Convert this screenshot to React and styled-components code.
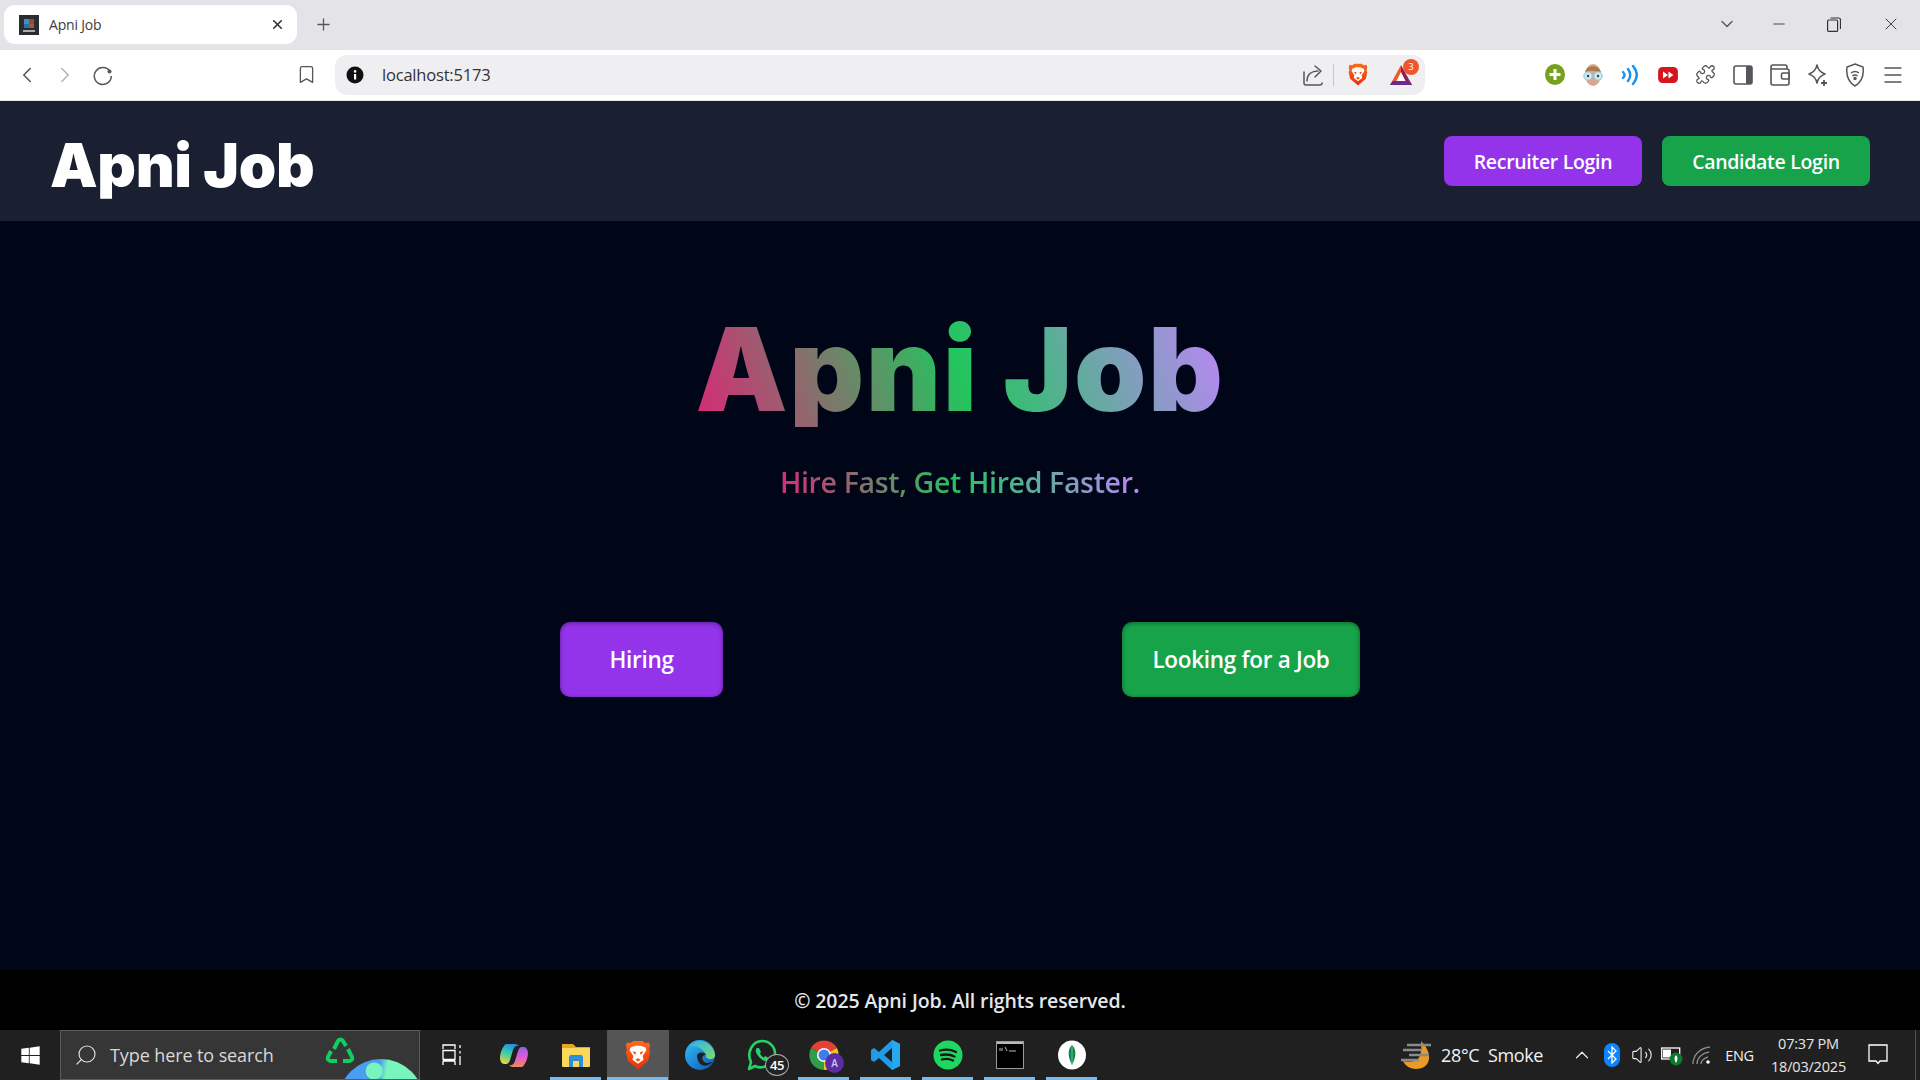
import React from "react";
import styled, { createGlobalStyle } from "styled-components";
import { ChevronLeft, ChevronRight, Bookmark, Puzzle, ChevronDown, Minus, X, Plus, Search, ChevronUp, Volume2, Menu } from "lucide-react";
import { FaWindows } from "react-icons/fa";

const Global = createGlobalStyle`
  html, body { margin: 0; padding: 0; width: 1920px; height: 1080px; overflow: hidden; background: #020617; }
  * { box-sizing: border-box; }
  body { font-family: "Open Sans", "Noto Sans", sans-serif; }
`;
const Screen = styled.div`display:flex;flex-direction:column;width:1920px;height:1080px;overflow:hidden;`;
const TabStrip = styled.div`display:flex;align-items:flex-start;height:50px;flex:none;background:#e3e3e8;padding:5px 0 0 4px;`;
const Tab = styled.div`display:flex;align-items:center;width:293px;height:39px;background:#fff;border-radius:11px;padding:0 12px 0 15px;color:#3c3c40;`;
const TabTitle = styled.span`font-size:14px;margin-left:10px;flex:1;letter-spacing:-.2px;`;
const Slot = styled.div`display:flex;align-items:center;justify-content:center;flex:none;width:${p=>p.$w||38}px;height:${p=>p.$h||38}px;color:${p=>p.$c||"#55565a"};margin-left:${p=>p.$ml||0}px;`;
const Toolbar = styled.div`display:flex;align-items:center;height:51px;flex:none;background:#fff;padding:0 0 1px 8px;border-bottom:1px solid #e8e8ea;`;
const Omnibox = styled.div`display:flex;align-items:center;width:1090px;height:40px;margin-left:10px;background:#efeff2;border-radius:12px;padding:0 8px 0 10px;`;
const Url = styled.span`font-size:16.5px;color:#333;margin-left:17px;letter-spacing:-.2px;flex:1;`;
const Divider = styled.div`width:1px;height:22px;background:#c6c6ca;margin:0 8px 0 5px;flex:none;`;
const Badged = styled.div`position:relative;width:32px;height:32px;margin-left:11px;flex:none;display:flex;align-items:center;justify-content:center;`;
const RedBadge = styled.span`position:absolute;top:0;right:-2px;width:16px;height:16px;border-radius:50%;background:#f1562b;color:#fff;font-size:9.5px;display:flex;align-items:center;justify-content:center;`;

const Header = styled.header`display:flex;align-items:center;justify-content:space-between;height:120px;flex:none;background:#1a2032;padding:0 50px;`;
const Brand = styled.h1`margin:0;font-family:Inter,sans-serif;font-size:60px;font-weight:900;color:#fff;letter-spacing:-.35px;line-height:1;transform:translateY(4px);`;
const HeaderActions = styled.div`display:flex;gap:20px;`;
const HeaderButton = styled.button`border:0;height:50px;width:${p=>p.$w}px;border-radius:8px;background:${p=>p.$bg};color:#fff;font:600 19.5px "Open Sans",sans-serif;letter-spacing:-.3px;`;

const Main = styled.main`flex:1;background:#010518;display:flex;flex-direction:column;align-items:center;padding-top:90px;`;
const gradient = `background:linear-gradient(70deg,#db2777,#22c55e,#c084fc);-webkit-background-clip:text;background-clip:text;color:transparent;`;
const HeroTitle = styled.h2`margin:0;font-family:Inter,sans-serif;font-size:116px;line-height:116px;font-weight:900;letter-spacing:1.6px;${gradient}`;
const Tagline = styled.p`margin:36px 0 0;font-size:28.5px;line-height:38px;font-weight:600;letter-spacing:-.35px;${gradient}`;
const CTARow = styled.div`display:flex;justify-content:space-between;width:800px;margin-top:121px;`;
const CTA = styled.button`border:0;height:75px;width:${p=>p.$w}px;border-radius:10px;background:${p=>p.$bg};color:#fff;font:600 22.5px "Open Sans",sans-serif;letter-spacing:-.3px;box-shadow:inset 0 1px 4px rgba(0,0,0,.4);`;

const Footer = styled.footer`display:flex;align-items:center;justify-content:center;height:60px;flex:none;background:#000;color:#e5e7eb;font-size:19.500px;font-weight:600;letter-spacing:-.1px;`;

const Taskbar = styled.div`display:flex;align-items:stretch;height:50px;flex:none;background:#202020;color:#fff;position:relative;`;
const StartCell = styled.div`width:60px;display:flex;align-items:center;justify-content:center;`;
const SearchBox = styled.div`position:relative;overflow:hidden;width:360px;display:flex;align-items:center;background:#363636;border:1px solid #5b5b5b;padding-left:13px;color:#d8d8d8;font-size:18px;`;
const SearchLabel = styled.span`margin-left:12px;letter-spacing:-.1px;`;
const RecycleWrap = styled.div`position:absolute;left:263px;top:4px;`;
const Globe = styled.div`position:absolute;left:277px;top:28px;width:86px;height:86px;border-radius:50%;background:radial-gradient(circle at 42% 14%,#77f5bd 0 9%,transparent 10%),radial-gradient(circle at 50% 30%,#4a9df0 0 8%,transparent 9%),linear-gradient(100deg,#4a9df0 0 42%,#77f5bd 50%);`;
const TaskItem = styled.div`position:relative;width:62px;display:flex;align-items:center;justify-content:center;background:${p=>p.$active?"#555":"transparent"};left:1px;`;
const Underline = styled.span`position:absolute;bottom:0;left:${p=>p.$active?0:5}px;right:${p=>p.$active?1:6}px;height:3px;background:#76b9ed;`;
const CountBadge = styled.span`position:absolute;left:34px;top:24px;width:24px;height:22px;border-radius:50%;background:#222;border:1px solid #aaa;color:#fff;font-size:13px;font-weight:600;display:flex;align-items:center;justify-content:center;letter-spacing:-.5px;`;
const AccountBadge = styled.span`position:absolute;left:32px;top:23px;width:19px;height:20px;border-radius:50%;background:#5b2da3;color:#cfc3ff;font-size:10px;font-weight:600;display:flex;align-items:center;justify-content:center;`;
const Tray = styled.div`display:flex;align-items:center;margin-left:297px;position:relative;left:1px;`;
const TrayText = styled.span`font-size:${p=>p.$s||18}px;width:${p=>p.$w}px;margin-left:${p=>p.$ml||0}px;flex:none;text-align:${p=>p.$a||"left"};color:#f2f2f2;white-space:pre;letter-spacing:${p=>p.$ls||-.35}px;`;
const Clock = styled.div`width:93px;flex:none;text-align:center;font-size:14.5px;line-height:23px;color:#e6e6e6;letter-spacing:-.2px;`;
const EdgeLine = styled.span`position:absolute;right:4px;top:0;bottom:0;width:1px;background:#555;`;

const Favicon = () => (<svg width="20" height="20" viewBox="0 0 20 20"><rect width="20" height="20" fill="#2a2c30"/><rect x="5" y="4" width="5" height="5" fill="#3f8fc4"/><rect x="10" y="4" width="5" height="5" fill="#8a5140"/><rect x="5" y="9" width="5" height="4" fill="#2f6f9e"/><rect x="10" y="9" width="5" height="4" fill="#b0552f"/><rect x="4" y="15" width="12" height="2" fill="#aab"/></svg>);
const Reload = () => (<svg width="22" height="22" viewBox="0 0 22 22" fill="none" stroke="#55565a" strokeWidth="1.500"><path d="M18 7.500A8.500 8.500 0 1 0 19.300 12"/><circle cx="17.500" cy="7.500" r="2" fill="#55565a" stroke="none"/></svg>);
const ShareIcon = () => (<svg width="22" height="22" viewBox="0 0 22 22" fill="none" stroke="#55565a" strokeWidth="1.500" strokeLinejoin="round" strokeLinecap="round"><path d="M2 8v11a2 2 0 0 0 2 2h14a2 2 0 0 0 2-2"/><path d="M5 17c0-7 5-10 11-10M13 2l6 5-6 6"/></svg>);
const Info = () => (<svg width="18" height="18" viewBox="0 0 18 18"><circle cx="9" cy="9" r="8.500" fill="#111"/><rect x="8" y="8" width="2.200" height="5.500" fill="#fff"/><circle cx="9.100" cy="5.400" r="1.300" fill="#fff"/></svg>);
const Brave = ({ w, h, id }) => (<svg width={w} height={h} viewBox="0 0 28 32"><defs><linearGradient id={id} x1="0" y1="0" x2="0" y2="1"><stop offset="0" stopColor="#ff6a1a"/><stop offset="1" stopColor="#e8300a"/></linearGradient></defs><path d="M6 3 9 1h10l3 2 4-.500 1 3.500-1 4 1 3-2 9-11 9.500L3 22l-2-9 1-3-1-4 1-3.500z" fill={`url(#${id})`}/><path d="M6 8l5-2h6l5 2 1 3-4 6 1 4-6 4.500L8 21l1-4-4-6z" fill="#fff"/><path d="M8 12l4 1-1 3zM20 12l-4 1 1 3zM11 21l3-1.500 3 1.500-3 2z" fill="#f0500f"/></svg>);
const Bat = () => (<svg width="24" height="22" viewBox="0 0 24 22"><path d="M12 1 1 21h11z" fill="#ef5a2a"/><path d="M12 1l11 20H12z" fill="#8e1f55"/><path d="M1 21h22l-2.500-4H3.500z" fill="#6a2a91"/><path d="M12 8l4.500 9h-9z" fill="#fff"/></svg>);
const GreenPlus = () => (<svg width="20" height="21" viewBox="0 0 20 21"><ellipse cx="10" cy="10.500" rx="10" ry="10.500" fill="#76a01f"/><path d="M10 5v11M4.500 10.500h11" stroke="#fff" strokeWidth="3"/></svg>);
const Avatar = () => (<svg width="22" height="24" viewBox="0 0 22 24"><ellipse cx="11" cy="12" rx="8" ry="11" fill="#dda688"/><path d="M3 10C4 1 18 1 19 10 14 8 8 6 3 10z" fill="#a47b52"/><circle cx="6" cy="13" r="4.200" fill="#cde8ee" stroke="#8fc9d7"/><circle cx="16" cy="13" r="4.200" fill="#cde8ee" stroke="#8fc9d7"/><circle cx="6" cy="13" r="1.200" fill="#345"/><circle cx="16" cy="13" r="1.200" fill="#345"/></svg>);
const Waves = () => (<svg width="20" height="24" viewBox="0 0 20 24" fill="none" stroke="#1593f5" strokeWidth="2.400" strokeLinecap="round"><path d="M3 9c2 2 2 4 0 6M8 6c3 4 3 8 0 12M13 3c5 6 5 12 0 18"/></svg>);
const RedFF = () => (<svg width="20" height="18" viewBox="0 0 22 20"><rect y="1" width="22" height="18" rx="5" fill="#d5161f"/><path d="M5.500 6l5.500 4-5.500 4zM11.500 6l5.500 4-5.500 4z" fill="#fff"/></svg>);
const Sidebar = () => (<svg width="20" height="20" viewBox="0 0 20 20"><rect x="1" y="1" width="18" height="18" rx="2" fill="none" stroke="#55565a" strokeWidth="1.600"/><rect x="13" y="1" width="6" height="18" fill="#55565a"/></svg>);
const Wallet = () => (<svg width="20" height="22" viewBox="0 0 20 22" fill="none" stroke="#55565a" strokeWidth="1.600"><path d="M17 5V3a2 2 0 0 0-2-2H3a2 2 0 0 0-2 2v16a2 2 0 0 0 2 2h14a2 2 0 0 0 2-2V7a2 2 0 0 0-2-2H1"/><rect x="11.500" y="9" width="8" height="6" rx="1.500"/></svg>);
const Star = () => (<svg width="20" height="24" viewBox="0 0 20 24" fill="none" stroke="#55565a" strokeWidth="1.600"><path d="M9 2c1 5 3 7 8 9-5 2-7 4-8 9-1-5-3-7-8-9 5-2 7-4 8-9z" strokeLinejoin="round"/><path d="M16 17v6M13 20h6" stroke="#55565a" strokeWidth="1.800"/></svg>);
const Shield = () => (<svg width="20" height="24" viewBox="0 0 20 24" fill="none" stroke="#55565a" strokeWidth="1.500"><path d="M10 1l8 3c1 8-1 15-8 19C3 19 1 12 2 4z"/><path d="M6 10c2.500-2 5.500-2 8 0M7.500 12.800c1.500-1 3.500-1 5 0" /><circle cx="10" cy="15.500" r="1" fill="#55565a"/></svg>);
const Restore = () => (<svg width="14" height="15" viewBox="0 0 14 15" fill="none" stroke="#333" strokeWidth="1.200"><rect x=".6" y="3" width="10" height="11.400" rx="1"/><path d="M3.500 1h8a2 2 0 0 1 2 2v9"/></svg>);
const Recycle = () => (<svg width="32" height="32" viewBox="0 0 32 32" fill="none" stroke="#0fcf5f" strokeWidth="4" strokeLinejoin="round"><path d="M10 14l4-8c1-2 4-2 5 0l3 5M24 14l4 8c1 2-1 4-3 4h-6M13 26H7c-2 0-4-2-3-4l3-6"/></svg>);
const TaskView = () => (<svg width="20" height="22" viewBox="0 0 20 22" fill="none" stroke="#fff" strokeWidth="1.300"><path d="M1 5V1h12v4M1 17v4M13 17v4M1 17h12M1 6.500h12v9H1zM18 1v3M18 7v2.500M18 12v9"/></svg>);
const ribbon = "M8 1h7c2 0 3 1 4 2-3-1-5 1-6 4l-3 10c-.5 2-2 4-4 4H4c-2 0-4-3-4-6 0-4 2-10 4-12 1-2 2-2 4-2z";
const Copilot = () => (<svg width="28" height="25" viewBox="0 0 28 25"><defs><linearGradient id="cpa" x1="0.600" y1="0" x2="0.300" y2="1"><stop offset="0" stopColor="#1f8fe8"/><stop offset=".5" stopColor="#3dd0a0"/><stop offset="1" stopColor="#f4d13a"/></linearGradient><linearGradient id="cpb" x1="0.500" y1="0" x2="0.500" y2="1"><stop offset="0" stopColor="#f0885a"/><stop offset=".5" stopColor="#e05ad0"/><stop offset="1" stopColor="#8a62f0"/></linearGradient></defs><path d={ribbon} fill="url(#cpa)"/><path d={ribbon} fill="url(#cpb)" transform="rotate(180 14 12.500)"/></svg>);
const Explorer = () => (<svg width="28" height="26" viewBox="0 0 28 26"><path d="M0 2h11l3 3h14v19H0z" fill="#e3a720"/><rect y="6" width="28" height="19" rx="1" fill="#fbd75b"/><path d="M7 25v-10c0-1 1-2 2-2h10c1 0 2 1 2 2v10h-4v-6h-6v6z" fill="#2d8ed6"/></svg>);
const Edge = () => (<svg width="32" height="32" viewBox="0 0 32 32"><defs><linearGradient id="eg" x1="0" y1="0" x2="1" y2="1"><stop offset="0" stopColor="#35c1f1"/><stop offset=".55" stopColor="#1b84d8"/><stop offset="1" stopColor="#0c59a4"/></linearGradient><linearGradient id="eg2" x1="0" y1="0" x2="1" y2="1"><stop offset="0" stopColor="#2fb4e8"/><stop offset="1" stopColor="#7fdc6d"/></linearGradient></defs><circle cx="16" cy="16" r="15" fill="url(#eg)"/><path d="M6 7c6-8 22-6 25 8 1 5-6 7-9 3 1-6-9-12-16-11z" fill="url(#eg2)"/><path d="M13 17c0-4 7-5 9-1-5-1-5 7 1 8 3 0 5-1 6-2-3 6-15 8-16-5z" fill="#202020"/></svg>);
const Whatsapp = () => (<svg width="30" height="32" viewBox="0 0 30 32" fill="none"><path d="M2 30l2-7C-1 13 6 2 15 2c8 0 13 6 13 13 0 10-12 16-20 12z" stroke="#25d366" strokeWidth="2.600" strokeLinejoin="round"/><path d="M10 9c-3 2 0 7 3 10 3 3 6 4 8 2l1-2-4-2-1 1.500c-2-1-3-2-4-4l1-1.500-2-4z" fill="#25d366"/></svg>);
const Chrome = () => (<svg width="30" height="30" viewBox="0 0 30 30"><path d="M15 15 2 8A15 15 0 0 1 28 8z" fill="#e34133"/><path d="M15 15 28 8A15 15 0 0 1 15 30z" fill="#f6c21c"/><path d="M15 15 15 30A15 15 0 0 1 2 8z" fill="#2f9e4b"/><circle cx="15" cy="15" r="7" fill="#fff"/><circle cx="15" cy="15" r="5.500" fill="#3f7ee8"/></svg>);
const VSCode = () => (<svg width="30" height="32" viewBox="0 0 30 32"><path d="M21 1l8 4v22l-8 4-13-12-5 4-3-2v-10l3-2 5 4zM21 9l-8 7 8 7z" fill="#1f9ce8"/><path d="M21 1l8 4v22l-8 4z" fill="#25a8ee"/></svg>);
const Spotify = () => (<svg width="30" height="30" viewBox="0 0 30 30" fill="none"><circle cx="15" cy="15" r="14.500" fill="#1ed760"/><path d="M7 10.500c6-1.500 11-1 16 1.500M8 15c5-1 9-.8 13.500 1.500M9 19.500c4-1 7.500-.7 11 1" stroke="#181818" strokeWidth="2.300" strokeLinecap="round"/></svg>);
const Cmd = () => (<svg width="28" height="28" viewBox="0 0 28 28"><rect x=".5" y=".5" width="27" height="27" fill="#000" stroke="#9a9a9a"/><rect x="1" y="1" width="26" height="2" fill="#b8b8b8"/><path d="M4 7v3M6 7v3M9 6l2 4M13 10h7" stroke="#bbb" fill="none"/></svg>);
const Mongo = () => (<svg width="30" height="30" viewBox="0 0 30 30"><ellipse cx="15" cy="15" rx="14" ry="14.500" fill="#fff"/><path d="M15 5c4 4 5 10 0 20-5-10-4-16 0-20z" fill="#10854f"/><path d="M15 5v20" stroke="#7ed6a0" strokeWidth=".8"/></svg>);
const Weather = () => (<svg width="30" height="30" viewBox="0 0 30 30"><path d="M20 1c5 5 9 12 8 18-1 7-7 10-13 10-5 0-11-3-13-8 6 1 12 1 15-2 3-4 4-10 3-18z" fill="#eb9a24"/><path d="M6 5h25M2 10h18M8 15h20M0 20h18" stroke="#8a8a8a" strokeWidth="2.400"/></svg>);
const BluetoothPill = () => (<svg width="16" height="24" viewBox="0 0 16 24"><rect width="16" height="24" rx="8" fill="#0a84ff"/><path d="M4 8l8 8-4 4V4l4 4-8 8" fill="none" stroke="#fff" strokeWidth="1.300"/></svg>);
const Battery = () => (<svg width="22" height="22" viewBox="0 0 22 22"><rect x=".7" y="4" width="18" height="11" fill="none" stroke="#fff" strokeWidth="1.300"/><rect x="2" y="5.500" width="8" height="8" fill="#fff"/><circle cx="15" cy="15" r="6.500" fill="#0c7a2e"/><path d="M15 11c2 2 2 5 0 8-2-3-2-6 0-8z" fill="#fff"/></svg>);
const Wifi = () => (<svg width="20" height="20" viewBox="0 0 20 20" fill="none" stroke="#8b8b8b" strokeWidth="1.300"><path d="M1 19C1 10 8 3 18 2M5 19c0-6 5-11 12-12M9 19c0-3 3-6 7-7"/><circle cx="16" cy="17" r="1.800" fill="#fff" stroke="none"/></svg>);
const Notify = () => (<svg width="20" height="22" viewBox="0 0 20 22" fill="none" stroke="#fff" strokeWidth="1.300"><path d="M1 1h18v16h-7l-2 2.500L8 17H1z"/></svg>);

export default function App() {
  return (
    <Screen>
      <Global />
      <TabStrip>
        <Tab>
          <Favicon />
          <TabTitle>Apni Job</TabTitle>
          <X size={15} strokeWidth={2.6} color="#333" />
        </Tab>
        <Slot $w={38} $ml={7}><Plus size={19} strokeWidth={1.6} /></Slot>
        <Slot $w={38} $ml={1366}><ChevronDown size={20} strokeWidth={1.6} /></Slot>
        <Slot $w={38} $ml={14}><Minus size={18} strokeWidth={1.2} color="#333" /></Slot>
        <Slot $w={38} $ml={17}><Restore /></Slot>
        <Slot $w={38} $ml={19}><X size={20} strokeWidth={1.1} color="#333" /></Slot>
      </TabStrip>
      <Toolbar>
        <Slot><ChevronLeft size={26} strokeWidth={1.4} /></Slot>
        <Slot $c="#b4b4b8"><ChevronRight size={26} strokeWidth={1.4} /></Slot>
        <Slot><Reload /></Slot>
        <Slot $ml={165}><Bookmark size={21} strokeWidth={1.5} /></Slot>
        <Omnibox>
          <Slot $w={20} $h={20}><Info /></Slot>
          <Url>localhost:5173</Url>
          <Slot $w={30} $h={30}><ShareIcon /></Slot>
          <Divider />
          <Slot $w={32} $h={32}><Brave w={20} h={23} id="brave-a" /></Slot>
          <Badged><Bat /><RedBadge>3</RedBadge></Badged>
        </Omnibox>
        <Slot $ml={111}><GreenPlus /></Slot>
        <Slot $w={37.5}><Avatar /></Slot>
        <Slot $w={37.5}><Waves /></Slot>
        <Slot $w={37.5}><RedFF /></Slot>
        <Slot $w={37.5}><Puzzle size={21} strokeWidth={1.5} /></Slot>
        <Slot $w={37.5}><Sidebar /></Slot>
        <Slot $w={37.5}><Wallet /></Slot>
        <Slot $w={37.5}><Star /></Slot>
        <Slot $w={37.5}><Shield /></Slot>
        <Slot $w={37.5}><Menu size={24} strokeWidth={1.4} /></Slot>
      </Toolbar>
      <Header>
        <Brand>Apni Job</Brand>
        <HeaderActions>
          <HeaderButton $w={198} $bg="#9333ea">Recruiter Login</HeaderButton>
          <HeaderButton $w={208} $bg="#16a34a">Candidate Login</HeaderButton>
        </HeaderActions>
      </Header>
      <Main>
        <HeroTitle>Apni Job</HeroTitle>
        <Tagline>Hire Fast, Get Hired Faster.</Tagline>
        <CTARow>
          <CTA $w={163} $bg="#9333ea">Hiring</CTA>
          <CTA $w={238} $bg="#16a34a">Looking for a Job</CTA>
        </CTARow>
      </Main>
      <Footer>© 2025 Apni Job. All rights reserved.</Footer>
      <Taskbar>
        <StartCell><FaWindows size={21} color="#fff" /></StartCell>
        <SearchBox>
          <Search size={24} strokeWidth={1.2} color="#ddd" style={{ transform: "scaleX(-1)" }} />
          <SearchLabel>Type here to search</SearchLabel>
          <RecycleWrap><Recycle /></RecycleWrap>
          <Globe />
        </SearchBox>
        <TaskItem><TaskView /></TaskItem>
        <TaskItem><Copilot /></TaskItem>
        <TaskItem><Explorer /><Underline /></TaskItem>
        <TaskItem $active><Brave w={26} h={30} id="brave-b" /><Underline $active /></TaskItem>
        <TaskItem><Edge /></TaskItem>
        <TaskItem><Whatsapp /><CountBadge>45</CountBadge></TaskItem>
        <TaskItem><Chrome /><AccountBadge>A</AccountBadge><Underline /></TaskItem>
        <TaskItem><VSCode /><Underline /></TaskItem>
        <TaskItem><Spotify /><Underline /></TaskItem>
        <TaskItem><Cmd /><Underline /></TaskItem>
        <TaskItem><Mongo /><Underline /></TaskItem>
        <Tray>
          <Slot $w={32} $h={32}><Weather /></Slot>
          <TrayText $w={102} $ml={9}>28°C  Smoke</TrayText>
          <Slot $w={30} $ml={24} $c="#eee"><ChevronUp size={22} strokeWidth={1.3} /></Slot>
          <Slot $w={30}><BluetoothPill /></Slot>
          <Slot $w={30} $c="#eee"><Volume2 size={22} strokeWidth={1.2} /></Slot>
          <Slot $w={30}><Battery /></Slot>
          <Slot $w={30}><Wifi /></Slot>
          <TrayText $w={45} $s={14.5} $a="center">ENG</TrayText>
          <Clock>07:37 PM<br />18/03/2025</Clock>
          <Slot $w={45}><Notify /></Slot>
        </Tray>
        <EdgeLine />
      </Taskbar>
    </Screen>
  );
}
